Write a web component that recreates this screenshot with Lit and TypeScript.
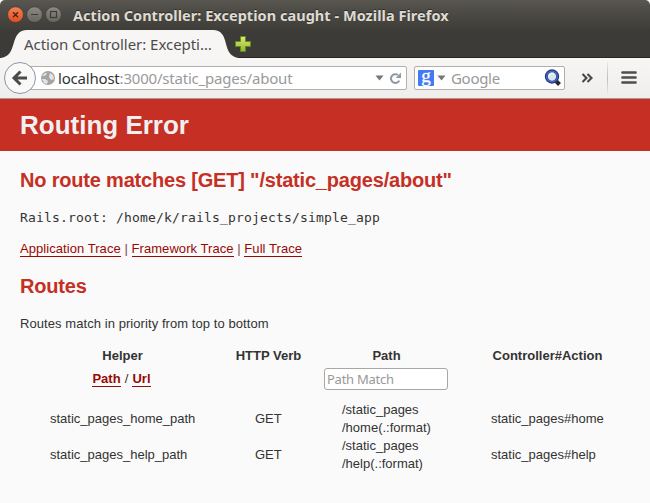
import { LitElement, html, css, svg } from "lit";
import { customElement } from "lit/decorators.js";

const routes = [
  { helper: "static_pages_home_path", verb: "GET", path: ["/static_pages", "/home(.:format)"], action: "static_pages#home" },
  { helper: "static_pages_help_path", verb: "GET", path: ["/static_pages", "/help(.:format)"], action: "static_pages#help" },
];

const arrowDown = html`<svg class="caret" width="9" height="6" viewBox="0 0 9 6"><path d="M.5 .5H8.500L4.500 5.500Z" fill="#777"/></svg>`;

@customElement("window-chrome")
class WindowChrome extends LitElement {
  static styles = css`
    :host { display: block; height: 99px; font-family: "Noto Sans", sans-serif; }
    svg { display: block; flex: none; }
    .title { height: 30px; display: flex; align-items: center; background: linear-gradient(#595750 0, #504e48 8px, #3e3d38 30px); color: #dfdbd2; border-radius: 5px 5px 0 0; }
    .title svg { margin-left: 7px; margin-top: -1px; }
    .caption { margin-left: 11px; font-size: 14.5px; font-weight: 700; line-height: 30px; white-space: nowrap; letter-spacing: 0.04px; text-shadow: 0 -1px #2e2d29; }
    .tabs { height: 28px; background: #3c3b37; display: flex; box-shadow: inset 0 -1px #282724; }
    .tab { position: relative; width: 233px; height: 28px; }
    .tab svg { position: absolute; left: 0; top: 0; }
    .label { position: absolute; left: 24px; top: 0; line-height: 28px; font-size: 15px; color: #4c4c4c; white-space: nowrap; letter-spacing: -0.04px; }
    .plus { margin: 5px 0 0 1px; }
    .bar { height: 40px; background: linear-gradient(#f7f6f5, #f0eeed); display: flex; align-items: center; box-sizing: border-box; }
    .back { position: relative; z-index: 1; margin: 0 0 0 3px; }
    .field { flex: none; box-sizing: border-box; height: 24px; border: 1px solid #b3afaa; border-radius: 2px; background: #fff; display: flex; align-items: center; font-size: 15px; white-space: nowrap; }
    .url { width: 387px; margin-left: -17px; padding-left: 19px; color: #9a9a9a; }
    .url b { font-weight: 400; color: #333; }
    .address { margin-left: 2px; width: 317px; letter-spacing: -0.2px; }
    .reload { margin-left: 5px; }
    .search { width: 151px; margin-left: 7px; padding-left: 3px; color: #999; }
    .search .caret { margin: 0 5px 0 3px; }
    .google { width: 16px; height: 16px; border-radius: 1px; background: #4479f4; color: #fff; font: 19px/12px "Liberation Serif", serif; text-align: center; -webkit-text-stroke: 0.3px #fff; }
    .hint { width: 93px; letter-spacing: -0.3px; }
    .more { margin-left: 16px; }
    .sep { width: 1px; height: 32px; margin-left: 13px; background: linear-gradient(#e8e8e8, #b8bec6, #e8e8e8); }
    .menu { margin-left: 13px; }
    .edge { height: 1px; background: #a39c98; }
  `;

  render() {
    return html`
      <div class="title">
        <svg width="55" height="18" viewBox="0 0 55 18">
          <defs>
            <linearGradient id="o" x2="0" y2="1"><stop stop-color="#f58359"/><stop offset="1" stop-color="#df4d1c"/></linearGradient>
            <linearGradient id="g" x2="0" y2="1"><stop stop-color="#8d8b83"/><stop offset="1" stop-color="#65635c"/></linearGradient>
          </defs>
          <circle cx="8.500" cy="8.700" r="7.900" fill="url(#o)" stroke="#32302b" stroke-width=".6"/>
          <path d="M6 6.200l5 5M11 6.200l-5 5" stroke="#472217" stroke-width="1.300"/>
          ${[27.5, 46.5].map((x) => svg`<circle cx=${x} cy="8.700" r="7.900" fill="url(#g)" stroke="#32302b" stroke-width=".6"/>`)}
          <path d="M24 8.500h7" stroke="#3c3b37"/>
          <rect x="43.500" y="5.500" width="6" height="6" fill="none" stroke="#3c3b37" stroke-width="1.200"/>
        </svg>
        <span class="caption">Action Controller: Exception caught - Mozilla Firefox</span>
      </div>
      <div class="tabs">
        <div class="tab">
          <svg width="240" height="28" viewBox="0 0 240 28"><path d="M0 28C9 27 11 22 13.500 14C16 5 19 0 27 0H213C221 0 224 5 226 14C228 22 231 27 239 28Z" fill="#f7f6f5"/></svg>
          <span class="label">Action Controller: Excepti…</span>
        </div>
        <svg class="plus" width="18" height="18" viewBox="0 0 18 18">
          <defs><linearGradient id="p" x2="0" y2="1"><stop stop-color="#dbea72"/><stop offset="1" stop-color="#94b62e"/></linearGradient></defs>
          <path d="M6.500 1.500h5v5h5v5h-5v5h-5v-5h-5v-5h5z" fill="url(#p)" stroke="#618a20"/>
        </svg>
      </div>
      <div class="bar">
        <svg class="back" width="34" height="34" viewBox="0 0 34 34">
          <circle cx="17" cy="17" r="15.500" fill="#f9f9f8" stroke="#8997a8"/>
          <path d="M17.500 10.500L11 17l6.500 6.500M12 17H24" fill="none" stroke="#4b4b4b" stroke-width="3"/>
        </svg>
        <div class="field url">
          <svg width="16" height="16" viewBox="0 0 16 16">
            <circle cx="8" cy="8" r="7" fill="#a4a4a4"/>
            <path d="M2 6l3-3 2 0-1 2-2 1zM10 3l3 2 1 4-3 1-2-3zM2 9l3 0 3 2-1 3-3-1z" fill="#e4e4e4"/>
          </svg>
          <span class="address"><b>localhost</b>:3000/static_pages/about</span>
          ${arrowDown}
          <svg class="reload" width="13" height="13" viewBox="0 0 13 13">
            <path d="M10.300 8.600A4.400 4.400 0 1 1 9 3" fill="none" stroke="#8e9aa6" stroke-width="2"/><path d="M12 .5V6H6.700Z" fill="#8e9aa6"/>
          </svg>
        </div>
        <div class="field search">
          <span class="google">g</span>
          ${arrowDown}
          <span class="hint">Google</span>
          <svg width="18" height="18" viewBox="0 0 18 18">
            <path d="M11.500 11.500l4 4" stroke="#29292c" stroke-width="4"/>
            <circle cx="8" cy="7.500" r="5.700" fill="#d8e5f5" stroke="#243a86" stroke-width="3"/>
            <circle cx="8" cy="7.500" r="5.300" fill="none" stroke="#4a69b8" stroke-width="1.300"/>
            <path d="M5 7a3.300 3.300 0 0 1 5-2" fill="none" stroke="#fff"/>
          </svg>
        </div>
        <svg class="more" width="13" height="10" viewBox="0 0 13 10"><path d="M1.500 1l4 4-4 4M6.500 1l4 4-4 4" fill="none" stroke="#484848" stroke-width="2.100"/></svg>
        <div class="sep"></div>
        <svg class="menu" width="16" height="14" viewBox="0 0 16 14"><path d="M1.500 1.500h13M1.500 6.500h13M1.500 11.500h13" stroke="#4f4d4d" stroke-width="2.700" stroke-linecap="round"/></svg>
      </div>
      <div class="edge"></div>
    `;
  }
}

@customElement("app-root")
class AppRoot extends LitElement {
  static styles = css`
    :host { display: block; height: 503px; overflow: hidden; background: #fafafa; color: #333; font: 13px/18px "Liberation Sans", Arial, sans-serif; }
    header { height: 52px; box-sizing: border-box; padding: 12px 20px 0; background: #c52f24; color: #f0f0f0; }
    h1 { margin: 0; font-size: 26px; line-height: 28px; }
    main { padding: 0 20px; display: flow-root; }
    h2 { margin: 16px 0; font-size: 20px; line-height: 25px; color: #c52f24; white-space: nowrap; letter-spacing: -0.19px; }
    .message { margin-top: 17px; }
    pre { margin: 0 0 13px; font: 13px/18px "DejaVu Sans Mono", monospace; letter-spacing: 0.174px; }
    p { margin: 0; letter-spacing: 0.07px; }
    .traces { letter-spacing: 0.06px; color: #804a46; }
    a { color: #980905; text-decoration: none; box-shadow: 0 1px #980905; }
    .note { margin-bottom: 14px; }
    table { border-collapse: collapse; table-layout: fixed; width: 614px; }
    th, td { padding: 0; }
    .c1 { width: 205px; } .c2 { width: 87px; } .c3 { width: 149px; } .c4 { width: 173px; }
    .names th { height: 18px; }
    .tools th { height: 36px; vertical-align: top; }
    .switch { padding-top: 5px; margin-left: -2px; }
    .switch span { font-weight: 400; margin: 0 0.5px; }
    input { display: block; box-sizing: border-box; width: 124px; height: 22px; margin: 3px auto 0 12px; padding: 0 2px; border: 1px solid #aaa6a1; border-radius: 3px; background: #fff; font: 13px "Noto Sans", sans-serif; letter-spacing: -0.25px; }
    input::placeholder { color: #999; opacity: 1; }
    td { height: 36px; padding-left: 30px; white-space: nowrap; }
  `;

  render() {
    return html`
      <window-chrome></window-chrome>
      <header><h1>Routing Error</h1></header>
      <main>
        <h2 class="message">No route matches [GET] "/static_pages/about"</h2>
        <pre>Rails.root: /home/k/rails_projects/simple_app</pre>
        <p class="traces"><a>Application Trace</a> | <a>Framework Trace</a> | <a>Full Trace</a></p>
        <h2>Routes</h2>
        <p class="note">Routes match in priority from top to bottom</p>
        <table>
          <colgroup><col class="c1"><col class="c2"><col class="c3"><col class="c4"></colgroup>
          <thead>
            <tr class="names"><th>Helper</th><th>HTTP Verb</th><th>Path</th><th>Controller#Action</th></tr>
            <tr class="tools"><th><div class="switch"><a>Path</a> <span>/</span> <a>Url</a></div></th><th></th><th><input placeholder="Path Match"></th><th></th></tr>
          </thead>
          <tbody>
            ${routes.map((r) => html`<tr><td>${r.helper}</td><td>${r.verb}</td><td>${r.path[0]}<br>${r.path[1]}</td><td>${r.action}</td></tr>`)}
          </tbody>
        </table>
      </main>
    `;
  }
}
